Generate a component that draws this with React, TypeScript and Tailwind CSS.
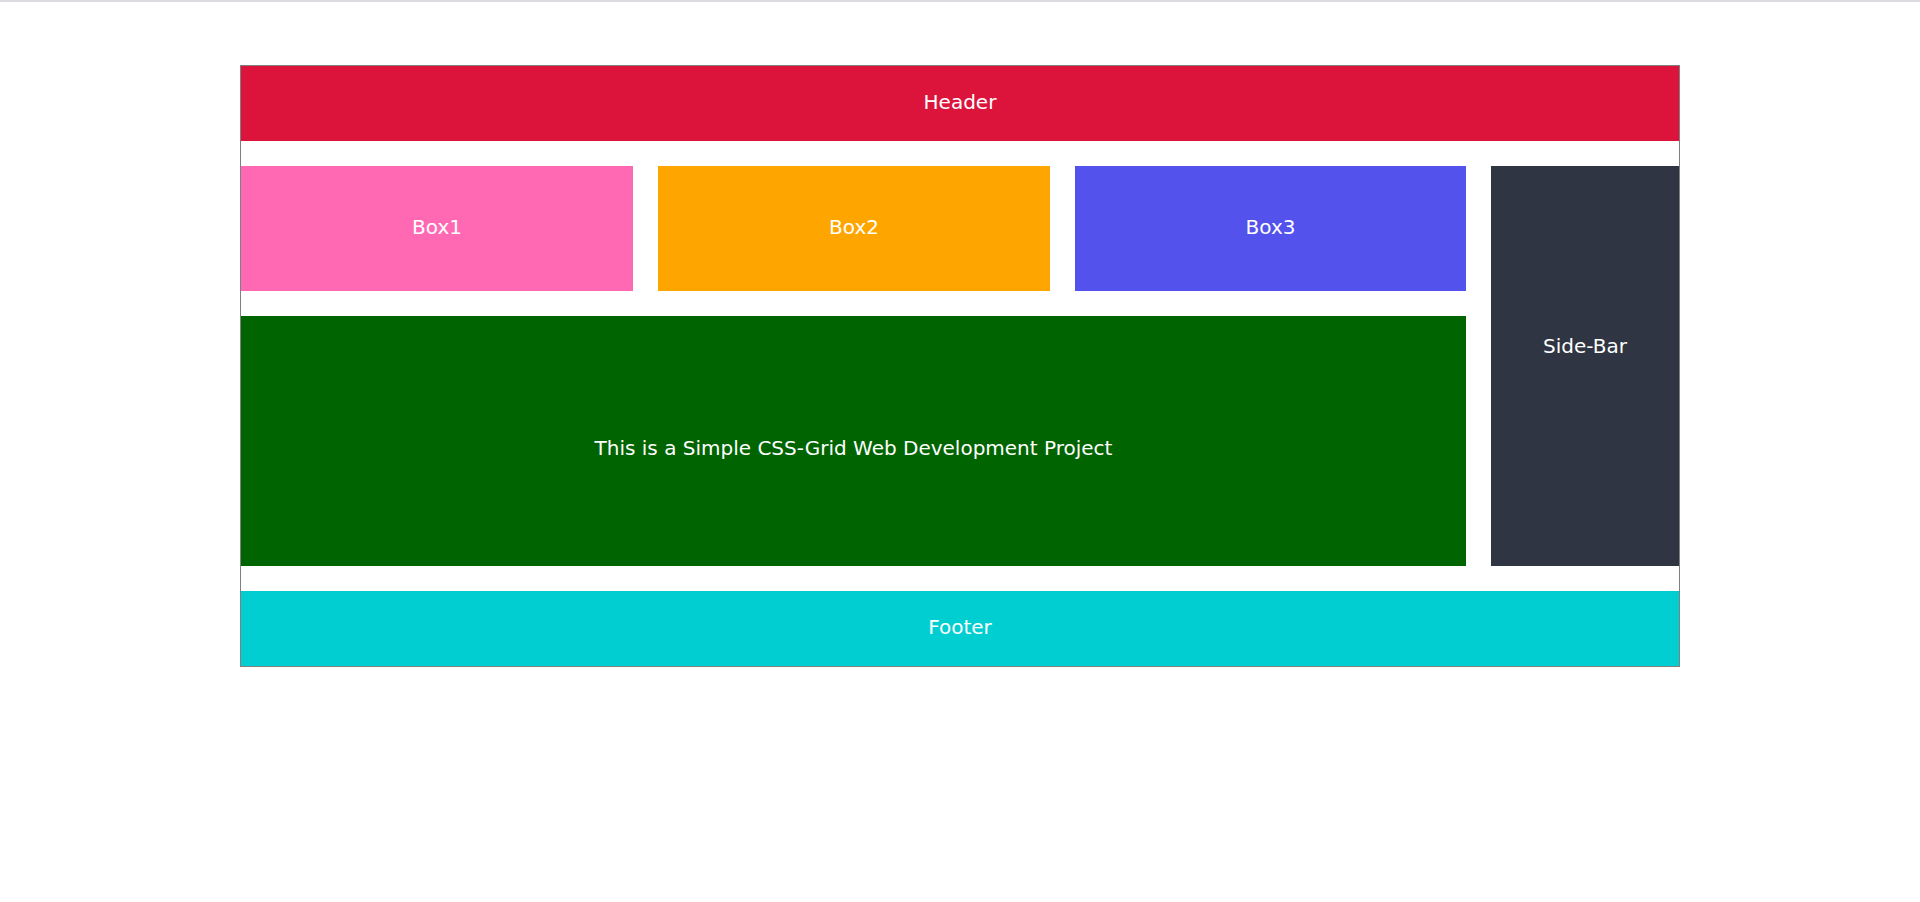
export default function App() {
  return (
    <div className="min-h-[902px] bg-white font-['DejaVu_Sans',sans-serif] text-[20px] text-white">
      <div className="h-[2px] bg-[#dcdce0]" />
      <div className="mx-auto mt-[63px] w-[1440px] border border-[#808080] grid grid-cols-[392px_392px_391px_188px] grid-rows-[75px_125px_250px_75px] gap-[25px]">
        <div className="col-span-4 flex items-center justify-center bg-[#dc143c] pb-[3px]">Header</div>
        <div className="flex items-center justify-center bg-[#ff69b4] pb-[4px]">Box1</div>
        <div className="flex items-center justify-center bg-[#ffa500] pb-[4px]">Box2</div>
        <div className="flex items-center justify-center bg-[#5352ed] pb-[4px]">Box3</div>
        <div className="row-span-2 flex items-center justify-center bg-[#2f3542] pb-[40px]">Side-Bar</div>
        <div className="col-span-3 flex items-center justify-center bg-[#006400] pt-[14px]">
          This is a Simple CSS-Grid Web Development Project
        </div>
        <div className="col-span-4 flex items-center justify-center bg-[#00ced1] pb-[4px]">Footer</div>
      </div>
    </div>
  );
}
